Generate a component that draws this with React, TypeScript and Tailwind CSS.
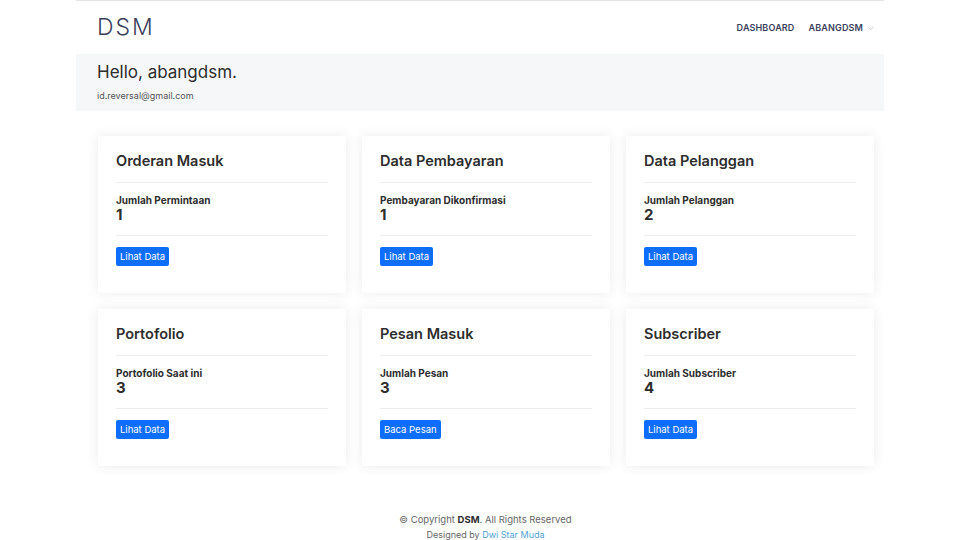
import { ChevronDown } from 'lucide-react';

type Stat = {
  title: string;
  label: string;
  value: number;
  action: string;
};

const stats: Stat[] = [
  { title: 'Orderan Masuk', label: 'Jumlah Permintaan', value: 1, action: 'Lihat Data' },
  { title: 'Data Pembayaran', label: 'Pembayaran Dikonfirmasi', value: 1, action: 'Lihat Data' },
  { title: 'Data Pelanggan', label: 'Jumlah Pelanggan', value: 2, action: 'Lihat Data' },
  { title: 'Portofolio', label: 'Portofolio Saat ini', value: 3, action: 'Lihat Data' },
  { title: 'Pesan Masuk', label: 'Jumlah Pesan', value: 3, action: 'Baca Pesan' },
  { title: 'Subscriber', label: 'Jumlah Subscriber', value: 4, action: 'Lihat Data' },
];

function StatCard({ stat }: { stat: Stat }) {
  return (
    <div className="h-[157px] bg-white px-[18px] pt-[15px] shadow-[0_0_12px_rgba(0,0,0,0.08)]">
      <h3 className="text-[14.5px] font-semibold leading-[20px] text-[#2d2d2d]">{stat.title}</h3>
      <div className="mt-[11px] border-t border-[#ececec]" />
      <p className="mt-[11px] text-[10px] font-bold leading-[12px] text-[#2d2d2d]">{stat.label}</p>
      <p className="text-[15px] font-bold leading-[17px] text-[#2d2d2d]">{stat.value}</p>
      <div className="mt-[12px] border-t border-[#ececec]" />
      <button className="mt-[11px] h-[19px] rounded-[2px] bg-[#0d6efd] px-[4px] text-[9.5px] leading-[19px] text-white">
        {stat.action}
      </button>
    </div>
  );
}

export default function App() {
  return (
    <div className="min-h-[540px] bg-white font-['Inter',sans-serif] text-[#333]">
      <div className="mx-auto w-[808px]">
        <header className="flex h-[54px] items-center justify-between border-t border-[#e4e4e4] pl-[21px] pr-[9px]">
          <span className="text-[23px] font-light tracking-[2px] text-[#3b3f5c]">DSM</span>
          <nav className="flex items-center gap-[14px] pt-[1px] text-[9px] font-semibold tracking-[0.15px] text-[#3b3f5c]">
            <a>DASHBOARD</a>
            <a className="flex items-center gap-[3px]">
              ABANGDSM
              <ChevronDown className="h-[9px] w-[9px] text-[#aaa]" strokeWidth={1.5} />
            </a>
          </nav>
        </header>

        <section className="h-[57px] bg-[#f6f7f9] px-[21px] pt-[6px]">
          <h1 className="text-[17px] leading-[24px] text-[#2d2d2d]">Hello, abangdsm.</h1>
          <p className="mt-[5px] text-[9px] text-[#555]">id.reversal@gmail.com</p>
        </section>

        <main className="grid grid-cols-3 gap-x-[16px] gap-y-[16px] pl-[22px] pr-[10px] pt-[25px]">
          {stats.map((s) => (
            <StatCard key={s.title} stat={s} />
          ))}
        </main>

        <footer className="pl-[11px] pt-[46px] text-center text-[9.5px] leading-[15px] text-[#666]">
          <p>
            © Copyright <strong className="font-bold text-[#2d2d2d]">DSM</strong>. All Rights Reserved
          </p>
          <p className="text-[9px]">
            Designed by <span className="text-[#4ea3d6]">Dwi Star Muda</span>
          </p>
        </footer>
      </div>
    </div>
  );
}
